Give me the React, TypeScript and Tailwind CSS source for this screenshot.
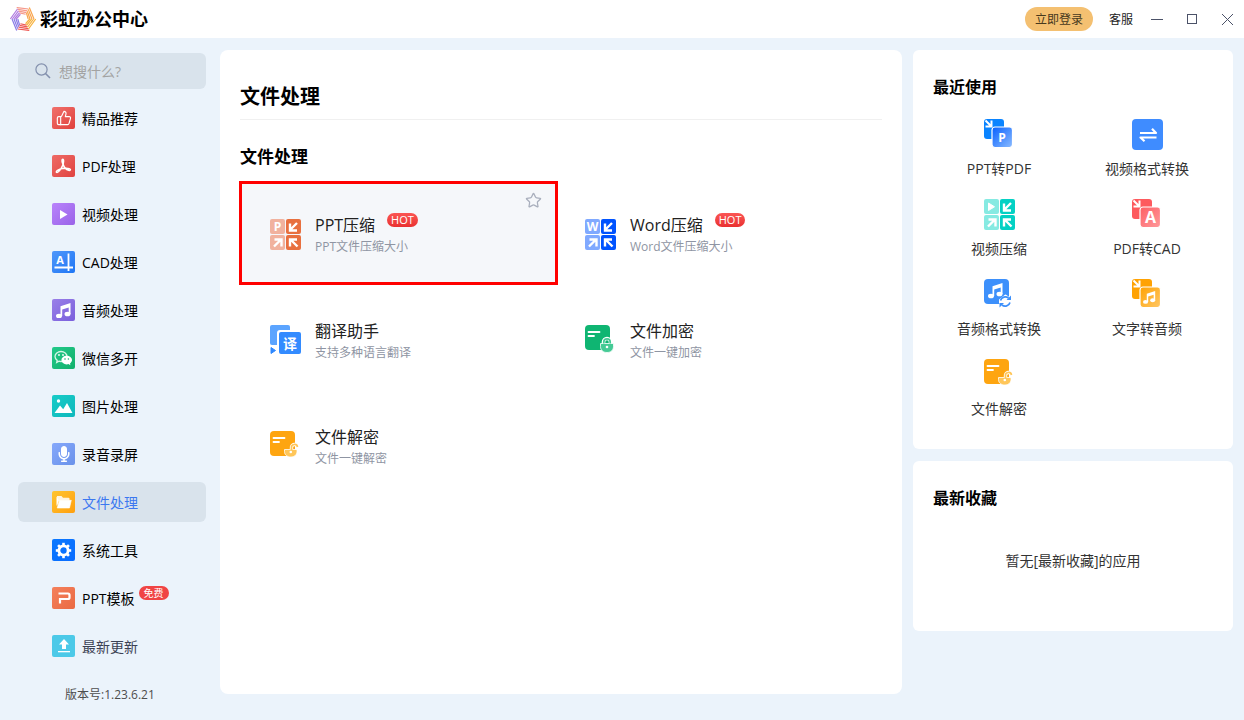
import { useState, type ReactNode } from 'react';
import clsx from 'clsx';
import { ThumbsUp, Star } from 'lucide-react';
import { FaMicrophone } from 'react-icons/fa';

/* ---------- Logo ---------- */

const LOGO_SIDES = ['#f59a8c', '#f9a54f', '#f7b23e', '#ee5a55', '#8a7be6', '#b07ae0'];

const hexPoint = (i: number, r: number) => {
  const a = ((i * 60 - 120) * Math.PI) / 180;
  return [13 + r * Math.cos(a), 12 + r * Math.sin(a) * 1.05];
};

const Logo = () => (
  <svg width="26" height="24" viewBox="0 0 26 24" aria-hidden="true">
    {LOGO_SIDES.map((color, i) =>
      [12, 10, 8, 6.2].map((r, k) => {
        const [x1, y1] = hexPoint(i, r + 0.6);
        const [x2, y2] = hexPoint(i + 1, r - 1);
        return (
          <line key={`${i}-${k}`} x1={x1} y1={y1} x2={x2} y2={y2} stroke={color} strokeWidth="1.2" />
        );
      })
    )}
  </svg>
);

/* ---------- App icons ---------- */

const LETTER = 'font-[Open_Sans,Noto_Sans_CJK_SC,sans-serif] font-bold';

const CompressIcon = ({ light, dark, letter }: { light: string; dark: string; letter?: string }) => (
  <svg width="31" height="31" viewBox="0 0 31 31" fill="none" aria-hidden="true">
    <rect x="0" y="0" width="15" height="15" rx="2" fill={light} />
    <rect x="16" y="0" width="15" height="15" rx="2" fill={dark} />
    <rect x="0" y="16" width="15" height="15" rx="2" fill={light} />
    <rect x="16" y="16" width="15" height="15" rx="2" fill={dark} />
    {letter ? (
      <text x="7.5" y="12" textAnchor="middle" fontSize="12" fill="#fff" className={LETTER}>{letter}</text>
    ) : (
      <path d="M4.500 4v7.500l6-3.750z" fill="#fff" stroke="#fff" strokeLinejoin="round" />
    )}
    <g stroke="#fff" strokeWidth="2.4">
      <path d="M27 4l-6.500 6.500M20 4.500v7h7" />
      <path d="M4 27.500l6.500-6.500M4.500 20.500h7v7" />
      <path d="M27.500 27.500l-7-7M20 27.500v-7h7" />
    </g>
  </svg>
);

const Note = ({ className }: { className?: string }) => (
  <g className={className} fill="#fff">
    <ellipse cx="3" cy="13" rx="3" ry="2.300" />
    <ellipse cx="11.500" cy="11" rx="3" ry="2.300" />
    <path d="M4.500 3.200L14.500 0v11h-1.800V4.500L6.200 6.600V13H4.500z" />
  </g>
);

const ConvertIcon = ({ id, back, from, to, children }: {
  id: string; back: string; from: string; to: string; children: ReactNode;
}) => (
  <svg width="31" height="31" viewBox="0 0 31 31" fill="none" aria-hidden="true">
    <defs>
      <linearGradient id={id} x1="0" y1="0" x2="1" y2="1">
        <stop offset="0" stopColor={from} />
        <stop offset="1" stopColor={to} />
      </linearGradient>
    </defs>
    <rect x="0" y="0" width="20" height="20" rx="3" fill={back} />
    <path d="M1.500 1.500l5.500 5.500M7.500 1.500v6h-6" stroke="#fff" strokeWidth="2" />
    <rect x="8" y="8" width="20.500" height="20.500" rx="3" fill={`url(#${id})`} stroke="#fff" strokeWidth="1.200" />
    {children}
  </svg>
);

const LockIcon = ({ fill, lock, open }: { fill: string; lock: string; open?: boolean }) => (
  <svg width="31" height="31" viewBox="0 0 31 31" fill="none" aria-hidden="true">
    <rect x="0" y="0" width="25" height="25" rx="4" fill={fill} />
    <path d="M3.500 7h11M3.500 11h5.500" stroke="#fff" strokeWidth="1.800" strokeLinecap="round" />
    {open ? (
      <>
        <path d="M21.500 18v-1a3 3 0 0 1 6-1" stroke="#fff" strokeWidth="3.400" />
        <path d="M14.500 18.500h12.500v2c0 3.500-2.800 5.500-6.200 5.500s-6.300-2-6.300-5.500z" fill={lock} stroke="#fff" strokeWidth=".8" />
        <path d="M21.500 19v-2a3 3 0 0 1 6-1" stroke={lock} strokeWidth="1.700" />
        <circle cx="20.800" cy="21" r="1.300" fill="#fff" />
      </>
    ) : (
      <>
        <path d="M18.500 19v-2a3.500 3.500 0 0 1 7 0v2" stroke="#fff" strokeWidth="3.600" />
        <path d="M15.500 18.500h13v3c0 4-3 6-6.500 6s-6.500-2-6.500-6z" fill={lock} stroke="#fff" strokeWidth=".8" />
        <path d="M18.800 18.500V17a3.200 3.200 0 0 1 6.400 0v1.500" stroke={lock} strokeWidth="1.700" />
        <circle cx="22" cy="22" r="1.300" fill="#fff" />
      </>
    )}
  </svg>
);

const TranslateIcon = () => (
  <svg width="31" height="31" viewBox="0 0 31 31" aria-hidden="true">
    <rect x="0" y="0" width="20" height="20" rx="2" fill="#5ba4ff" />
    <path d="M1 22.500l4.500 3-4.500 3z" fill="#2f88ff" stroke="#2f88ff" strokeLinejoin="round" />
    <rect x="7" y="5" width="25" height="25" rx="3" fill="#fff" />
    <rect x="9" y="7" width="22" height="22" rx="2" fill="#338bff" />
    <text x="20" y="23.500" textAnchor="middle" fontSize="14" fill="#fff" className="font-[Noto_Sans_CJK_SC,sans-serif] font-bold">译</text>
  </svg>
);

const SwapIcon = () => (
  <svg width="31" height="31" viewBox="0 0 31 31" fill="none" aria-hidden="true">
    <rect width="31" height="31" rx="4" fill="#3f8cff" />
    <path d="M8 14h16l-4-4.200M24.500 18.500H8.500l4 3.800" stroke="#fff" strokeWidth="2.200" strokeLinejoin="round" />
  </svg>
);

const AudioConvertIcon = () => (
  <svg width="31" height="31" viewBox="0 0 31 31" fill="none" aria-hidden="true">
    <rect width="25" height="25" rx="4" fill="#3d90fb" />
    <Note className="translate-x-[4px] translate-y-[4px]" />
    <path d="M21.500 16.500l5 3.500v3l-5 5.500-5.500-4.500v-3z" fill="#fff" stroke="#fff" strokeWidth="2" strokeLinejoin="round" />
    <path d="M16.500 21.500a5 5 0 0 1 8-2.500M26 23.500a5 5 0 0 1-8 2.500" stroke="#3d90fb" strokeWidth="1.700" />
    <path d="M22.500 21h4.500v-4.500zM20 24h-4.500v4.500z" fill="#3d90fb" />
  </svg>
);

const PdfGlyph = () => (
  <svg width="17" height="17" viewBox="0 0 17 17" fill="none" stroke="#fff" strokeWidth="1.500" strokeLinecap="round" aria-hidden="true">
    <path d="M8.200 6.500C6.800 4 6.600 1.300 7.700 1.200c1.200 0 1.200 3.500-.2 6.600C6 11.300 3.200 15 1.600 14.300c-1.300-.8 1.800-3.100 6-3.700 3.800-.6 7.800-.3 7.800 1 0 1.500-3.200.9-5.200-1.300-.9-.9-1.500-2.300-2-3.800z" />
  </svg>
);

const PlayGlyph = () => (
  <svg width="17" height="17" viewBox="0 0 17 17" aria-hidden="true">
    <path d="M5 4v9l7.500-4.500z" fill="#fff" />
  </svg>
);

const CadGlyph = () => (
  <svg width="23" height="22" viewBox="0 0 23 22" fill="none" aria-hidden="true">
    <text x="8" y="13" textAnchor="middle" fontSize="11" fill="#fff" className={LETTER}>A</text>
    <path d="M2.500 16.500H21M16.500 2.500V20" stroke="#fff" strokeWidth="1.800" />
  </svg>
);

const NoteGlyph = () => (
  <svg width="15" height="15" viewBox="0 0 15 15" aria-hidden="true">
    <Note />
  </svg>
);

const WechatGlyph = () => (
  <svg width="19" height="17" viewBox="0 0 19 17" fill="none" aria-hidden="true">
    <path d="M7 1.500c-3.300 0-6 2.200-6 5 0 1.600.9 3 2.200 3.900l-.5 2 2.300-1.200c.6.200 1.300.3 2 .3 3.300 0 6-2.200 6-5s-2.700-5-6-5z" stroke="#d5f5e6" strokeWidth="1.300" />
    <circle cx="5" cy="5" r=".9" fill="#fff" />
    <circle cx="9" cy="5" r=".9" fill="#fff" />
    <path d="M12.700 5.800c-2.900 0-5.200 1.900-5.200 4.300s2.300 4.300 5.200 4.300c.6 0 1.200-.1 1.700-.3l2 1.100-.4-1.800c1.200-.8 2-2 2-3.300 0-2.400-2.400-4.300-5.300-4.300z" fill="#fff" />
    <circle cx="11" cy="9" r=".8" fill="#16b574" />
    <circle cx="14.400" cy="9" r=".8" fill="#16b574" />
  </svg>
);

const ImageGlyph = () => (
  <svg width="19" height="16" viewBox="0 0 19 16" fill="#fff" aria-hidden="true">
    <circle cx="4.500" cy="3" r="1.700" />
    <path d="M0.500 15L6 7.500l3.200 3.800L13 5l5.500 10z" />
  </svg>
);

const FolderGlyph = () => (
  <svg width="17" height="14" viewBox="0 0 17 14" aria-hidden="true">
    <path d="M2 1h4.500L8 2.700h5.500a1 1 0 0 1 1 1v2H4L2 11z" fill="#fff" fillOpacity=".85" />
    <path d="M1.500 1.500v10l2-6.500z" fill="#fff" />
    <path d="M4.500 5.300h11.800L14.500 13H2.200z" fill="#fff" stroke="#fff" strokeWidth=".6" strokeLinejoin="round" />
  </svg>
);

const GearGlyph = () => (
  <svg width="17" height="17" viewBox="0 0 17 17" fill="none" stroke="#fff" aria-hidden="true">
    <circle cx="8.500" cy="8.500" r="4.600" strokeWidth="2.800" />
    {[0, 45, 90, 135, 180, 225, 270, 315].map((deg) => (
      <path key={deg} d="M8.500 3.500V.8" strokeWidth="2.600" transform={`rotate(${deg} 8.5 8.5)`} />
    ))}
  </svg>
);

const TemplateGlyph = () => (
  <svg width="16" height="16" viewBox="0 0 16 16" fill="none" stroke="#fff" strokeWidth="2.200" aria-hidden="true">
    <path d="M2.500 3.500H12a1.500 1.500 0 0 1 1.500 1.500v2.500A1.500 1.500 0 0 1 12 9H4v4.500" />
  </svg>
);

const UpdateGlyph = () => (
  <svg width="16" height="16" viewBox="0 0 16 16" fill="#fff" aria-hidden="true">
    <path d="M8 1l5 5.500h-3V11H6V6.500H3z" />
    <rect x="2" y="13" width="12" height="1.300" />
  </svg>
);

/* ---------- Data ---------- */

const NAV = [
  { label: '精品推荐', tile: 'from-[#f0706c] to-[#e03f3c]', glyph: <ThumbsUp size={16} strokeWidth={1.7} /> },
  { label: 'PDF处理', tile: 'from-[#ee6a66] to-[#e04240]', glyph: <PdfGlyph /> },
  { label: '视频处理', tile: 'from-[#b983fb] to-[#9a63e8]', glyph: <PlayGlyph /> },
  { label: 'CAD处理', tile: 'from-[#4f97fa] to-[#1d76f5]', glyph: <CadGlyph /> },
  { label: '音频处理', tile: 'from-[#9a7fe8] to-[#7a5fdc]', glyph: <NoteGlyph /> },
  { label: '微信多开', tile: 'from-[#22c98a] to-[#12b06c]', glyph: <WechatGlyph /> },
  { label: '图片处理', tile: 'from-[#18ccc8] to-[#0fb8bc]', glyph: <ImageGlyph /> },
  { label: '录音录屏', tile: 'from-[#86a8fb] to-[#6a92ea]', glyph: <FaMicrophone size={16} /> },
  { label: '文件处理', tile: 'from-[#ffc52e] to-[#ff9f0c]', glyph: <FolderGlyph /> },
  { label: '系统工具', tile: 'from-[#0a78ff] to-[#0a6cff]', glyph: <GearGlyph /> },
  { label: 'PPT模板', tile: 'from-[#f4805c] to-[#ea6a42]', glyph: <TemplateGlyph />, badge: '免费' },
  { label: '最新更新', tile: 'from-[#4cc9e8] to-[#4cc9e8]', glyph: <UpdateGlyph />, muted: true },
];

const TOOLS = [
  { name: 'PPT压缩', desc: 'PPT文件压缩大小', hot: true, icon: <CompressIcon light="#f1b29e" dark="#e8703f" letter="P" /> },
  { name: 'Word压缩', desc: 'Word文件压缩大小', hot: true, icon: <CompressIcon light="#80a9ff" dark="#0053ff" letter="W" /> },
  { name: '翻译助手', desc: '支持多种语言翻译', icon: <TranslateIcon /> },
  { name: '文件加密', desc: '文件一键加密', icon: <LockIcon fill="#0fb572" lock="#45ca95" /> },
  { name: '文件解密', desc: '文件一键解密', icon: <LockIcon fill="#fea510" lock="#ffc659" open /> },
];

const RECENT = [
  {
    name: 'PPT转PDF',
    icon: (
      <ConvertIcon id="ppt-pdf" back="#0a84ff" from="#0560ff" to="#8cbcff">
        <text x="18" y="22.500" textAnchor="middle" fontSize="12" fill="#fff" className={LETTER}>P</text>
      </ConvertIcon>
    ),
  },
  { name: '视频格式转换', icon: <SwapIcon /> },
  { name: '视频压缩', icon: <CompressIcon light="#86eae2" dark="#04d1c4" /> },
  {
    name: 'PDF转CAD',
    icon: (
      <ConvertIcon id="pdf-cad" back="#fd5a5e" from="#fd5f64" to="#ff9a9c">
        <text x="18.500" y="24" textAnchor="middle" fontSize="16" fill="#fff" className={LETTER}>A</text>
      </ConvertIcon>
    ),
  },
  { name: '音频格式转换', icon: <AudioConvertIcon /> },
  {
    name: '文字转音频',
    icon: (
      <ConvertIcon id="text-audio" back="#ffa203" from="#ffa203" to="#ffc766">
        <Note className="translate-x-[11px] translate-y-[12px] scale-[.84]" />
      </ConvertIcon>
    ),
  },
  { name: '文件解密', icon: <LockIcon fill="#fea510" lock="#ffc659" open /> },
];

/* ---------- Layout ---------- */

const TitleBar = () => (
  <header className="flex h-[38px] shrink-0 items-center bg-white pr-[10px] pl-[10px]">
    <Logo />
    <h1 className="ml-1 text-[18px] leading-6 font-bold">彩虹办公中心</h1>
    <button type="button" className="ml-auto h-6 rounded-full bg-[#f4c071] px-[10px] pt-px text-xs text-[#47391d]">
      立即登录
    </button>
    <a href="#service" className="ml-4 pt-px text-xs text-[#222]">客服</a>
    <div className="ml-[17px] flex items-center gap-[23px] text-[#4b5268]">
      <button type="button" aria-label="最小化">
        <svg width="13" height="13" viewBox="0 0 13 13" stroke="currentColor"><path d="M1 6.500h12" /></svg>
      </button>
      <button type="button" aria-label="最大化">
        <svg width="12" height="13" viewBox="0 0 12 13" fill="none" stroke="currentColor"><rect x="1.500" y="1.500" width="9" height="9" /></svg>
      </button>
      <button type="button" aria-label="关闭">
        <svg width="13" height="13" viewBox="0 0 13 13" stroke="currentColor"><path d="M1 1l11 11M12 1L1 12" /></svg>
      </button>
    </div>
  </header>
);

const Sidebar = ({ active, onSelect }: { active: string; onSelect: (label: string) => void }) => (
  <aside className="flex w-[188px] shrink-0 flex-col pt-[15px]">
    <label className="flex h-9 items-center gap-2 rounded-md bg-[#d9e3ec] pl-[17px]">
      <svg width="16" height="16" viewBox="0 0 16 16" fill="none" stroke="#8390ad" strokeWidth="1.200" aria-hidden="true" className="shrink-0">
        <circle cx="6.500" cy="6.500" r="5.600" />
        <path d="M10.500 10.500l4.500 4.500" strokeWidth="1.600" />
      </svg>
      <input
        type="text"
        aria-label="搜索"
        placeholder="想搜什么?"
        className="w-full min-w-0 bg-transparent pt-px text-sm outline-none placeholder:text-[#a3a3a3]"
      />
    </label>
    <nav className="mt-[9px] flex flex-col gap-2">
      {NAV.map((item) => (
        <button
          key={item.label}
          type="button"
          onClick={() => onSelect(item.label)}
          className={clsx(
            'flex h-10 items-center rounded-md pl-[34px] text-sm',
            item.label === active && 'bg-[#d9e3ec] text-[#3c78f0]',
            item.muted && 'text-[#3c4254]'
          )}
        >
          <span className={clsx('flex h-[22px] w-[23px] items-center justify-center rounded-xs bg-linear-to-br text-white', item.tile)}>
            {item.glyph}
          </span>
          <span className="ml-[7px] pt-[2px]">{item.label}</span>
          {item.badge && (
            <span className="mt-2 ml-1 self-start rounded-full bg-[#f04444] px-[5px] text-[10px] leading-[14px] text-white">
              {item.badge}
            </span>
          )}
        </button>
      ))}
    </nav>
    <p className="mt-[19px] pl-[47px] text-xs leading-5 text-[#4d4d4d]">版本号:1.23.6.21</p>
  </aside>
);

const App = () => {
  const [active, setActive] = useState('文件处理');

  return (
    <div className="flex min-h-screen flex-col bg-[#ebf3fb] font-[Open_Sans,Noto_Sans_CJK_SC,sans-serif] text-black">
      <TitleBar />
      <div className="flex flex-1 pl-[18px] pr-[11px]">
        <Sidebar active={active} onSelect={setActive} />

        <main className="mt-3 mb-[26px] ml-[14px] min-w-0 flex-1 rounded-lg bg-white px-5 pt-[33px]">
          <h2 className="border-b border-[#f0f0f0] pb-2 text-xl leading-7 font-bold">文件处理</h2>
          <h3 className="mt-[25px] text-[17px] leading-6 font-bold">文件处理</h3>
          <div className="mt-[15px] grid grid-cols-2 gap-x-[2px] gap-y-2 pr-3 pl-[2px]">
            {TOOLS.map((tool, i) => (
              <a
                key={tool.name}
                href="#tool"
                className={clsx(
                  'relative flex h-[98px] items-center gap-[14px] pt-[3px] pl-7',
                  i === 0 && 'bg-[#f5f7fa] ring-3 ring-[#ff0000]'
                )}
              >
                {tool.icon}
                <div>
                  <div className="flex items-start">
                    <span className="text-base leading-6 text-[#222]">{tool.name}</span>
                    {tool.hot && (
                      <span className="ml-3 rounded-full bg-linear-to-b from-[#fb5553] to-[#e93030] px-1 text-[11px] leading-[14px] text-white">
                        HOT
                      </span>
                    )}
                  </div>
                  <p className="mt-px text-xs leading-[18px] text-[#8f95a3]">{tool.desc}</p>
                </div>
                {i === 0 && (
                  <Star size={17} strokeWidth={1.8} className="absolute top-2 right-[13px] text-[#a9afbd]" />
                )}
              </a>
            ))}
          </div>
        </main>

        <div className="mt-3 ml-[11px] flex w-80 shrink-0 flex-col gap-3">
          <section className="rounded-md bg-white px-3 pt-[25px] pb-[10px]">
            <h3 className="px-2 text-base leading-6 font-bold">最近使用</h3>
            <div className="mt-5 grid grid-cols-2">
              {RECENT.map((app) => (
                <a key={app.name} href="#app" className="flex h-20 flex-col items-center gap-[9px] text-sm leading-5 text-[#333]">
                  {app.icon}
                  {app.name}
                </a>
              ))}
            </div>
          </section>

          <section className="rounded-md bg-white px-5 pt-[25px] pb-[60px]">
            <h3 className="text-base leading-6 font-bold">最新收藏</h3>
            <p className="mt-[41px] text-center text-sm leading-5 text-[#333]">暂无[最新收藏]的应用</p>
          </section>
        </div>
      </div>
    </div>
  );
};

export default App;
